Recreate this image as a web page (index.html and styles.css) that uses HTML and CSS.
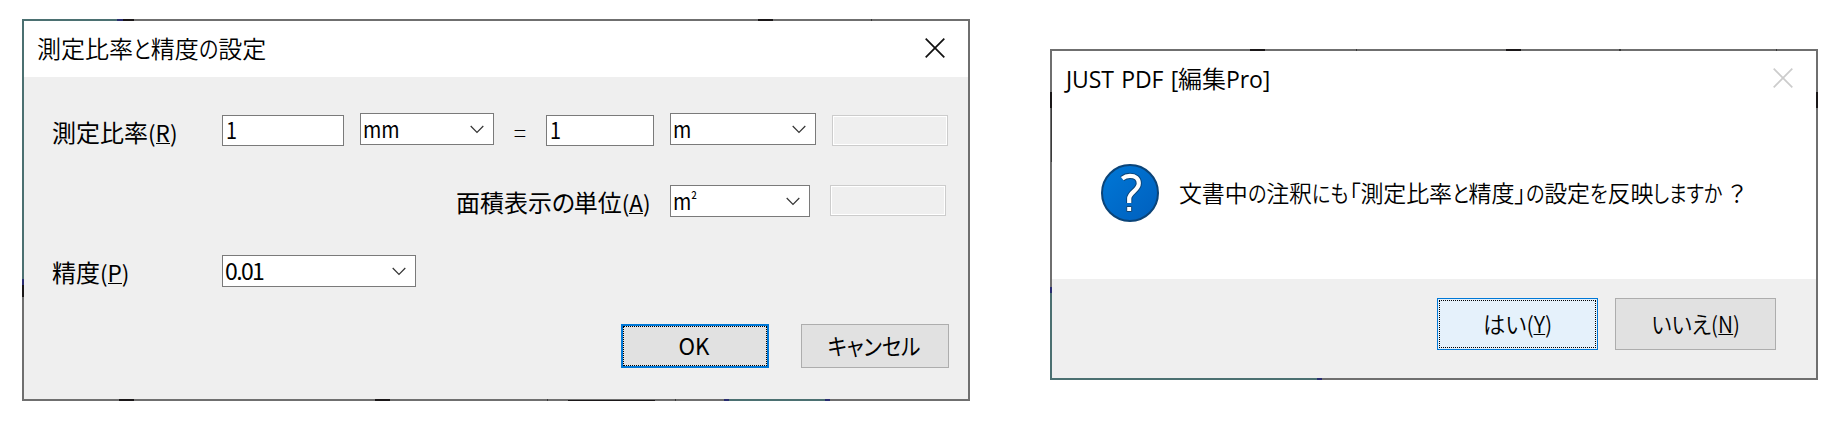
FILE: index.html
```html
<!DOCTYPE html>
<html lang="ja">
<head>
<meta charset="utf-8">
<title>測定比率と精度の設定</title>
<link rel="stylesheet" href="styles.css">
</head>
<body>
<main class="stage">
  <section class="dialog dialog-settings">
    <header class="titlebar">
      <h1 class="title title-settings">測定比率<span class="kana">と</span>精度<span class="kana">の</span>設定</h1>
      <svg class="close" viewBox="0 0 20 20"><path d="M.7.7 19.3 19.3M19.3.7.7 19.3"/></svg>
    </header>
    <div class="form">
      <div class="row row-ratio">
        <label class="label label-ratio">測定比率<span class="key">(<u>R</u>)</span></label>
        <div class="input input-from"><span class="unit">1</span></div>
        <div class="select select-from"><span class="unit">mm</span><svg class="chevron" viewBox="0 0 14 9"><path d="m.7 1 6.3 6.3L13.3 1"/></svg></div>
        <span class="equals">=</span>
        <div class="input input-to"><span class="unit">1</span></div>
        <div class="select select-to"><span class="unit">m</span><svg class="chevron" viewBox="0 0 14 9"><path d="m.7 1 6.3 6.3L13.3 1"/></svg></div>
        <div class="disabled"></div>
      </div>
      <div class="row row-area">
        <label class="label label-area">面積表示<span class="kana-wide">の</span>単位<span class="key">(<u>A</u>)</span></label>
        <div class="select select-area"><span class="unit">m<span class="square">²</span></span><svg class="chevron" viewBox="0 0 14 9"><path d="m.7 1 6.3 6.3L13.3 1"/></svg></div>
        <div class="disabled"></div>
      </div>
      <div class="row row-precision">
        <label class="label label-precision">精度<span class="key">(<u>P</u>)</span></label>
        <div class="select select-precision"><span class="number">0.01</span><svg class="chevron" viewBox="0 0 14 9"><path d="m.7 1 6.3 6.3L13.3 1"/></svg></div>
      </div>
      <div class="actions">
        <button class="button button-default"><span class="caption ok">OK</span></button>
        <button class="button"><span class="caption cancel">キャンセル</span></button>
      </div>
    </div>
  </section>

  <section class="dialog dialog-confirm">
    <header class="titlebar">
      <h2 class="title title-confirm">JUST PDF [<span class="kanji">編集</span>Pro]</h2>
      <svg class="close close-off" viewBox="0 0 20 20"><path d="M.7.7 19.3 19.3M19.3.7.7 19.3"/></svg>
    </header>
    <div class="message">
      <svg class="question" viewBox="0 0 58 58">
        <defs><linearGradient id="blue" x1="0" y1="0" x2="1" y2="1"><stop offset="0" stop-color="#0078d7"/><stop offset="1" stop-color="#005fbd"/></linearGradient></defs>
        <circle cx="29" cy="29" r="28" fill="url(#blue)" stroke="#0b4478" stroke-width="2"/>
        <path class="hook-edge" d="M21.2 14.6C23.5 12.8 26 11.8 29 11.8c5.500 0 8.800 2.700 8.800 7.500 0 7.500-9.600 8.500-9.600 15.500v4.200"/>
        <path class="hook" d="M21.2 14.6C23.5 12.8 26 11.8 29 11.8c5.500 0 8.800 2.700 8.800 7.500 0 7.500-9.600 8.500-9.600 15.500v4.200"/>
        <path class="dot" d="M25.700 42.500h5v5h-5z"/>
      </svg>
      <p class="message-text">文書中<span class="kana">の</span>注釈<span class="kana kana-2">にも</span>「測定比率<span class="kana">と</span>精度」<span class="kana">の</span>設定<span class="kana">を</span>反映<span class="kana kana-4">しますか</span><span class="mark">？</span></p>
    </div>
    <footer class="footer">
      <button class="button button-hot"><span class="caption yes">はい<span class="key">(<u>Y</u>)</span></span></button>
      <button class="button"><span class="caption no">いいえ<span class="key">(<u>N</u>)</span></span></button>
    </footer>
  </section>
</main>
</body>
</html>
```
FILE: styles.css
```css
* { box-sizing: border-box; }
body {
  margin: 0;
  width: 1841px;
  height: 442px;
  overflow: hidden;
  background: #fff;
  color: #000;
  font-family: "Noto Sans CJK JP", sans-serif;
}
.stage { display: flex; align-items: flex-start; gap: 80px; padding-left: 22px; }
.dialog { flex: none; display: flex; flex-direction: column; padding: 2px; background-color: #6f6f6f; background-repeat: no-repeat; }
.dialog-settings {
  width: 948px; height: 382px; margin-top: 19px;
  background-image:
    linear-gradient(90deg, #4b7071 95px, #292d70 95px 101px, #1a1718 101px 112px, transparent 112px 736px, #1a1718 736px 751px, transparent 751px 849px, #3b3b3b 849px 850px, transparent 850px),
    linear-gradient(#4b7071 260px, #292d70 260px 266px, #1a1718 266px 278px, transparent 278px),
    linear-gradient(90deg, transparent 97px, #1a1718 97px 112px, transparent 112px 353px, #1a1718 353px 368px, transparent 368px 525px, #3b3b3b 525px 526px, transparent 526px 653px, #3b3b3b 653px 654px, transparent 654px 702px, #292d70 702px 707px, #4b7071 707px 803px, #292d70 803px 808px, transparent 808px),
    linear-gradient(#1a1718, #1a1718);
  background-size: 100% 2px, 2px 100%, 100% 2px, 87px 1px;
  background-position: 0 0, 0 0, 0 100%, 546px 381px;
}
.dialog-confirm {
  width: 768px; height: 331px; margin-top: 49px;
  background-image:
    linear-gradient(90deg, transparent 200px, #1a1718 200px 215px, transparent 215px 306px, #3b3b3b 306px 307px, transparent 307px 456px, #1a1718 456px 471px, transparent 471px 569px, #3b3b3b 569px 571px, transparent 571px 726px, #3b3b3b 726px 727px, transparent 727px),
    linear-gradient(transparent 43px, #1a1718 43px 59px, transparent 59px 238px, #292d70 238px 244px, #4b7071 244px),
    linear-gradient(transparent 43px, #1a1718 43px 59px, transparent 59px),
    linear-gradient(90deg, #4b7071 267px, #292d70 267px 272px, transparent 272px),
    linear-gradient(#3b3b3b, #3b3b3b);
  background-size: 100% 2px, 2px 100%, 2px 100%, 100% 2px, 1px 54px;
  background-position: 0 0, 0 0, 100% 0, 0 100%, 1px 59px;
}
.titlebar { display: flex; justify-content: space-between; height: 56px; flex: none; padding: 0 23px 0 13px; background: #fff; }
.title { margin: 9px 0 0; font-size: 24px; font-weight: 350; line-height: 36px; white-space: nowrap; font-feature-settings: "palt"; }
.title-confirm { margin: 10px 0 0 1px; font-family: "Open Sans", "Noto Sans CJK JP", sans-serif; font-size: 23px; font-weight: 400; letter-spacing: -.1px; word-spacing: 1.5px; }
.kanji { font-weight: 350; font-size: 24px; }
.kana { display: inline-block; transform: scaleX(.83); transform-origin: 0 50%; margin-right: -3.5px; }
.kana-2 { margin-right: -6.5px; }
.kana-4 { margin-right: -13px; }
.kana-wide { letter-spacing: -1.5px; }
.close { width: 20px; height: 20px; margin-top: 17px; fill: none; stroke: #111; stroke-width: 1.7; }
.close-off { stroke: #ccc; }

.form { flex: 1; display: flex; flex-direction: column; padding-left: 28px; background: #efefef; }
.row { display: flex; align-items: flex-start; font-size: 23px; line-height: 32px; }
.row-ratio { margin-top: 36px; height: 72px; }
.row-area { height: 70px; padding-left: 404px; }
.row-precision { height: 69px; }
.label { flex: none; white-space: nowrap; font-size: 24px; font-feature-settings: "palt"; }
.label-ratio { width: 170px; margin-top: 3px; }
.label-area { width: 214px; margin-top: 1px; }
.label-precision { width: 170px; margin-top: 1px; }
.key { font-size: 22.5px; }
u { text-decoration: none; border-bottom: 1px solid #000; display: inline-block; line-height: 22px; }
.input { flex: none; display: flex; height: 31px; border: 1px solid #7a7a7a; background: #fff; margin-top: 2px; padding-left: 3px; line-height: 27px; }
.input-from { width: 122px; }
.input-to { width: 108px; }
.select { flex: none; display: flex; justify-content: space-between; height: 32px; border: 1px solid #7a7a7a; background: #fff; padding: 0 9px 0 2px; line-height: 28px; }
.select-from { width: 134px; margin-left: 16px; }
.select-to { width: 146px; margin-left: 16px; }
.select-area { width: 140px; }
.select-precision { width: 194px; }
.unit { transform: scaleX(.86); transform-origin: 0 50%; }
.square { display: inline-block; transform: scale(.75, .8); transform-origin: 0 30%; }
.number { letter-spacing: -1.6px; }
.chevron { width: 14px; height: 9px; margin-top: 11px; fill: none; stroke: #333; stroke-width: 1.2; }
.equals { flex: none; width: 52px; margin-top: 3px; text-align: center; font-weight: 300; }
.disabled { flex: none; width: 116px; height: 31px; margin: 2px 0 0 16px; border: 1px solid #ccc; box-shadow: inset 0 0 0 1px #fff; }
.row-area .disabled { margin: 0 0 0 20px; }
.actions { display: flex; gap: 32px; padding-left: 569px; }
.button { display: flex; align-items: center; justify-content: center; width: 148px; height: 44px; border: 1px solid #adadad; padding: 0 2px 2px 0; background: #e1e1e1; color: #000; font: 23px "Noto Sans CJK JP", sans-serif; white-space: nowrap; font-feature-settings: "palt"; }
.button-default { position: relative; border: 2px solid #0078d7; }
.button-default::before, .button-hot::before { content: ""; position: absolute; border: 1px dotted #000; }
.button-default::before { inset: 0; }
.button-hot { position: relative; }
.button-hot::before { inset: 1px; }
.ok { transform: scaleX(.97); }
.cancel { transform: scaleX(.89); }
.yes { transform: scaleX(.97); }
.no { transform: scaleX(.93); }

.message { height: 172px; display: flex; align-items: flex-start; padding: 57px 0 0 49px; background: #fff; }
.question { flex: none; width: 58px; height: 58px; }
.hook, .hook-edge { fill: none; stroke: #fff; stroke-width: 4.2; }
.hook-edge { stroke: #0b4478; stroke-width: 6.2; }
.dot { fill: #fff; stroke: #0b4478; stroke-width: 1; }
.message-text { margin: 10px 0 0 20px; font-size: 23px; font-weight: 350; line-height: 36px; letter-spacing: -.13px; white-space: nowrap; font-feature-settings: "palt"; }
.mark { margin-left: 5px; }
.footer { flex: 1; display: flex; justify-content: flex-end; gap: 17px; padding: 19px 40px 0 0; background: #efefef; }
.footer .button { width: 161px; height: 52px; padding: 0 0 2px; font-weight: 350; }
.footer .button-hot { background: #e5f1fb; border-color: #0078d7; }
```
